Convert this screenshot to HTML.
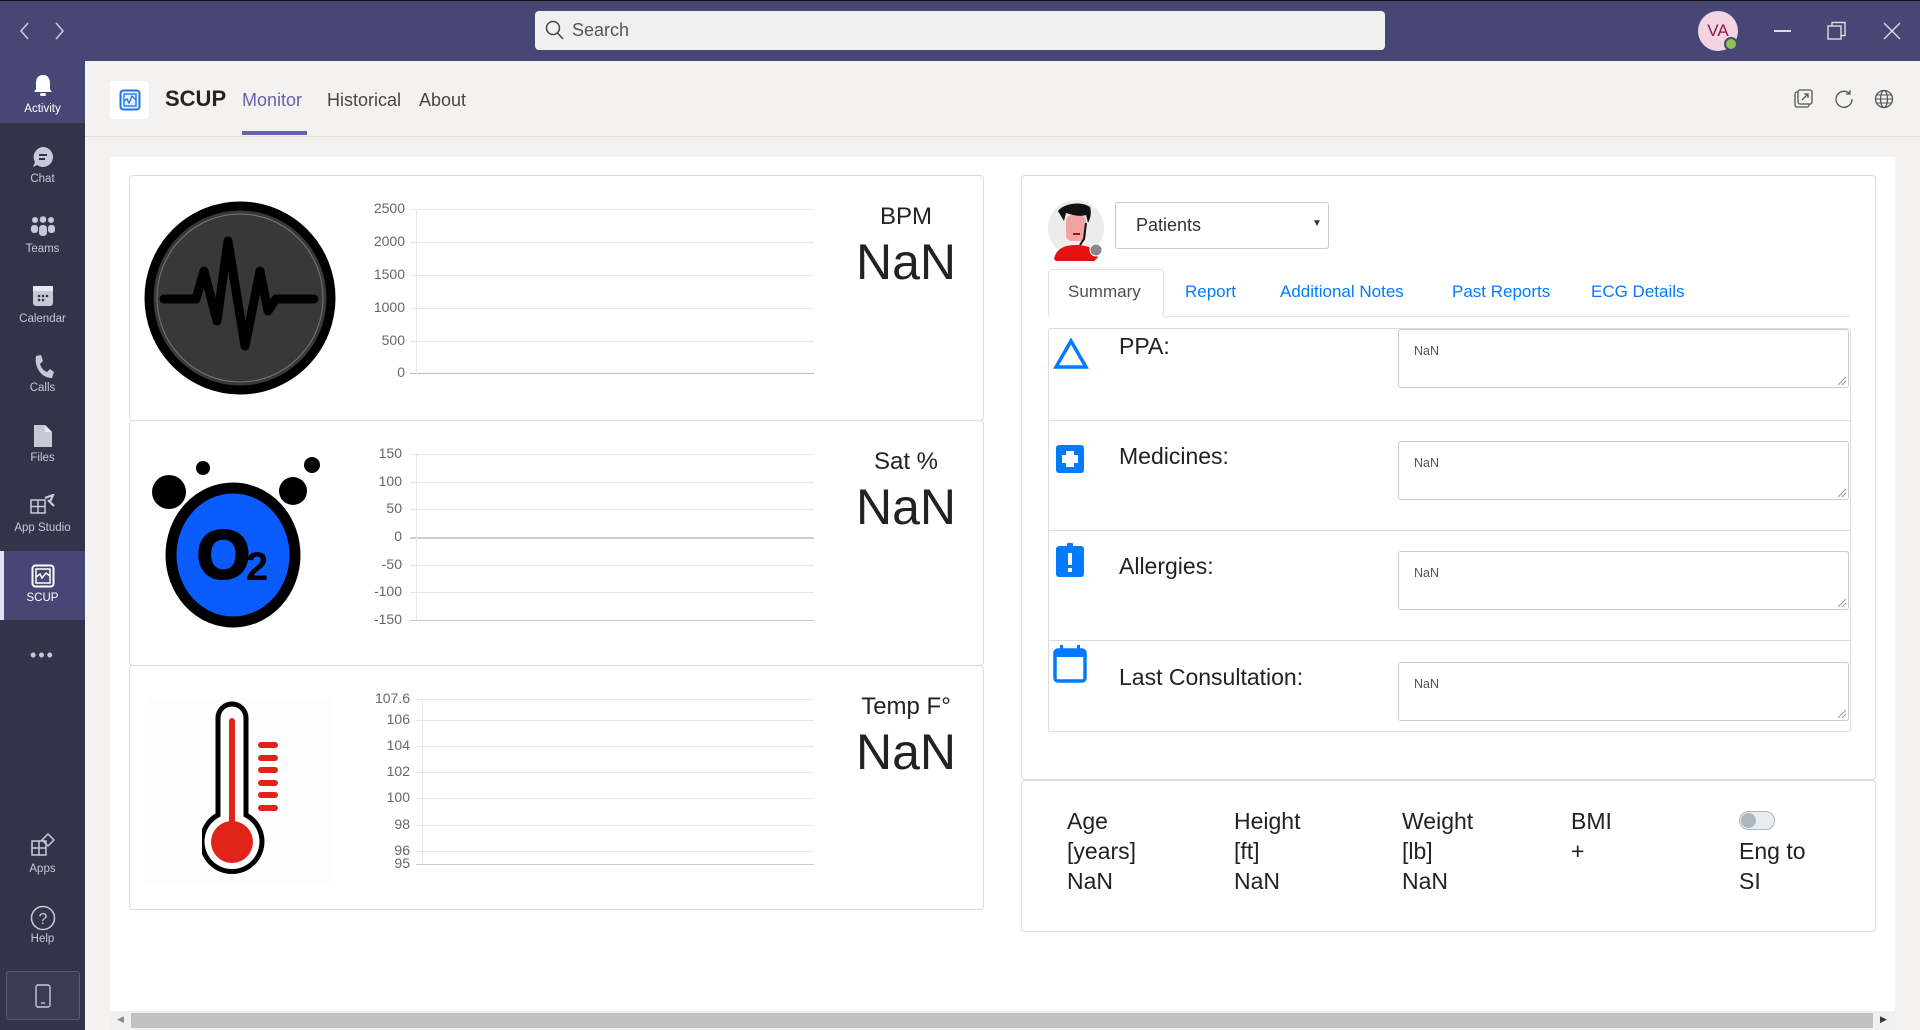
<!DOCTYPE html>
<html><head><meta charset="utf-8">
<style>
*{margin:0;padding:0;box-sizing:border-box}
body{width:1920px;height:1030px;overflow:hidden;background:#f3f2f1;font-family:"Liberation Sans",sans-serif;position:relative}
.a{position:absolute}
.top{left:0;top:0;width:1920px;height:61px;background:#464775;border-top:1px solid #111}
.side{left:0;top:61px;width:85px;height:969px;background:#33344a}
.si{position:absolute;left:0;width:85px;text-align:center;color:#c8c8d8;font-size:11.5px}
.card{position:absolute;background:#fff;border:1px solid #dcdcdc;border-radius:4px}
.yl{position:absolute;font-size:14px;color:#666;text-align:right;width:60px}
.gl{position:absolute;height:1px;background:#e6e6e6}
.big{position:absolute;font-size:50px;color:#222;width:160px;text-align:center}
.ttl{position:absolute;font-size:24px;color:#222;width:160px;text-align:center}
.tab{position:absolute;top:282px;font-size:17px;color:#007bff}
.lbl{position:absolute;left:1119px;font-size:23px;color:#222}
.ta{position:absolute;left:1398px;width:451px;height:59px;border:1px solid #ccc;border-radius:3px;background:#fff;font-size:12.5px;color:#555;padding:14px 15px}
.ta::after{content:"";position:absolute;right:2px;bottom:2px;width:8px;height:8px;background:linear-gradient(135deg,transparent 45%,#999 45%,#999 55%,transparent 55%,transparent 70%,#999 70%,#999 80%,transparent 80%)}
.hr{position:absolute;left:1048px;width:802px;height:1px;background:#dcdcdc}
.st{position:absolute;top:806px;font-size:23px;color:#222;line-height:30px}
</style></head><body>
<div class="a top"></div>
<svg class="a" style="left:16px;top:20px" width="56" height="22" viewBox="0 0 56 22"><path d="M12 3 L5 11 L12 19" stroke="#c9c9e0" stroke-width="1.6" fill="none"/><path d="M40 3 L47 11 L40 19" stroke="#c9c9e0" stroke-width="1.6" fill="none"/></svg>
<div class="a" style="left:535px;top:11px;width:850px;height:39px;background:#f0f0f0;border-radius:4px"></div>
<svg class="a" style="left:545px;top:20px" width="20" height="22"><circle cx="8" cy="8" r="6.5" stroke="#444" stroke-width="1.5" fill="none"/><path d="M12.5 13 L18 19" stroke="#444" stroke-width="1.5"/></svg>
<div class="a" style="left:572px;top:20px;font-size:18px;color:#555">Search</div>
<div class="a" style="left:1698px;top:11px;width:40px;height:40px;border-radius:50%;background:#f3d4e0;color:#8a1c47;font-size:17px;text-align:center;line-height:40px">VA</div>
<div class="a" style="left:1724px;top:37px;width:14px;height:14px;border-radius:50%;background:#92c353;border:2px solid #464775"></div>
<div class="a" style="left:1774px;top:30px;width:17px;height:1.5px;background:#ddd"></div>
<svg class="a" style="left:1827px;top:21px" width="20" height="20"><rect x="1" y="5" width="13" height="13" stroke="#ddd" stroke-width="1.4" fill="none"/><path d="M5 5 V1.5 H18 V14.5 H14" stroke="#ddd" stroke-width="1.4" fill="none"/></svg>
<svg class="a" style="left:1883px;top:22px" width="18" height="18"><path d="M1 1 L17 17 M17 1 L1 17" stroke="#ddd" stroke-width="1.4"/></svg>

<div class="a side"></div>
<div class="a" style="left:0;top:61px;width:85px;height:62px;background:#464775"></div>
<div class="a" style="left:0;top:551px;width:85px;height:69px;background:#464775"></div>
<div class="a" style="left:0;top:551px;width:4px;height:69px;background:#e2e2f6"></div>
<svg class="a" style="left:32px;top:73px" width="22" height="26"><path d="M11 2 C5 2 4 7 4 11 V16 L2 19 H20 L18 16 V11 C18 7 17 2 11 2Z" fill="#fff"/><rect x="8" y="20" width="6" height="3" rx="1.5" fill="#fff"/></svg>
<div class="si" style="top:103px;color:#fff">Activity</div>
<svg class="a" style="left:31px;top:145px" width="24" height="24"><path d="M12 2 A10 10 0 1 1 6 20 L2 22 L4 17 A10 10 0 0 1 12 2Z" fill="#c8c8d8"/><path d="M8 10 H16 M8 14 H14" stroke="#33344a" stroke-width="2"/></svg>
<div class="si" style="top:173px">Chat</div>
<svg class="a" style="left:30px;top:216px" width="26" height="22"><circle cx="5" cy="4" r="3" fill="#c8c8d8"/><circle cx="13" cy="3.5" r="3.3" fill="#c8c8d8"/><circle cx="21" cy="4" r="3" fill="#c8c8d8"/><rect x="1" y="9" width="7" height="8" rx="3" fill="#c8c8d8"/><rect x="9" y="9" width="8" height="11" rx="3.5" fill="#c8c8d8"/><rect x="18" y="9" width="7" height="8" rx="3" fill="#c8c8d8"/></svg>
<div class="si" style="top:243px">Teams</div>
<svg class="a" style="left:32px;top:285px" width="22" height="22"><rect x="1" y="1" width="20" height="20" rx="3" fill="#c8c8d8"/><rect x="1" y="1" width="20" height="5" fill="#e8e8f0"/><g fill="#33344a"><circle cx="7" cy="11" r="1.3"/><circle cx="11" cy="11" r="1.3"/><circle cx="15" cy="11" r="1.3"/><circle cx="7" cy="15" r="1.3"/><circle cx="11" cy="15" r="1.3"/></g></svg>
<div class="si" style="top:313px">Calendar</div>
<svg class="a" style="left:32px;top:354px" width="22" height="26"><path d="M4 2 L9 1 L11 7 L8 10 C9 14 12 17 15 18 L18 15 L22 18 L20 24 C10 24 2 14 4 2Z" fill="#c8c8d8"/></svg>
<div class="si" style="top:382px">Calls</div>
<svg class="a" style="left:33px;top:424px" width="20" height="24"><path d="M1 1 H12 L19 8 V23 H1Z" fill="#c8c8d8"/><path d="M12 1 V8 H19" fill="#e8e8f0"/></svg>
<div class="si" style="top:452px">Files</div>
<svg class="a" style="left:30px;top:494px" width="26" height="22"><rect x="1" y="6" width="14" height="13" stroke="#c8c8d8" stroke-width="1.5" fill="none"/><path d="M1 12.5 H15 M8 6 V19" stroke="#c8c8d8" stroke-width="1.5"/><path d="M15 4 L23 1 L20 8 M18 6 L24 12" stroke="#c8c8d8" stroke-width="2.2" fill="none"/></svg>
<div class="si" style="top:522px">App Studio</div>
<svg class="a" style="left:31px;top:564px" width="24" height="24"><rect x="1.5" y="1.5" width="21" height="21" rx="3" stroke="#fff" stroke-width="2" fill="none"/><rect x="5" y="5" width="14" height="14" stroke="#fff" stroke-width="1.5" fill="none"/><path d="M5 13 L9 10 L11 14 L15 9 L19 12" stroke="#fff" stroke-width="1.5" fill="none"/></svg>
<div class="si" style="top:592px;color:#fff">SCUP</div>
<div class="si" style="top:645px;font-size:18px;letter-spacing:2px">•••</div>
<svg class="a" style="left:31px;top:833px" width="24" height="24"><rect x="1" y="8" width="14" height="14" stroke="#c8c8d8" stroke-width="1.5" fill="none"/><path d="M1 15 H15 M8 8 V22" stroke="#c8c8d8" stroke-width="1.5"/><path d="M17 1 L23 7 L17 13 L11 7Z" stroke="#c8c8d8" stroke-width="1.5" fill="none"/></svg>
<div class="si" style="top:863px">Apps</div>
<svg class="a" style="left:30px;top:905px" width="26" height="26"><circle cx="13" cy="13" r="11.5" stroke="#c8c8d8" stroke-width="1.5" fill="none"/><text x="13" y="19" font-size="16" fill="#c8c8d8" text-anchor="middle" font-family="Liberation Sans">?</text></svg>
<div class="si" style="top:933px">Help</div>
<div class="a" style="left:6px;top:971px;width:74px;height:49px;border:1px solid #5a5b75;border-radius:3px;background:#3b3c54"></div>
<svg class="a" style="left:35px;top:984px" width="16" height="24"><rect x="1" y="1" width="14" height="22" rx="2" stroke="#c8c8d8" stroke-width="1.4" fill="none"/><path d="M6 19 H10" stroke="#c8c8d8" stroke-width="1.4"/></svg>

<div class="a" style="left:85px;top:136px;width:1835px;height:1px;background:#e1dfdd"></div>
<div class="a" style="left:110px;top:81px;width:39px;height:38px;background:#fff;border-radius:3px"></div>
<svg class="a" style="left:119px;top:89px" width="22" height="22"><rect x="1.5" y="1.5" width="19" height="19" rx="3" stroke="#1a73e8" stroke-width="2" fill="#e8f0fe"/><rect x="5" y="5" width="12" height="12" stroke="#1a73e8" stroke-width="1.3" fill="none"/><path d="M5 12 L8 10 L10 14 L13 7 L17 11" stroke="#1a73e8" stroke-width="1.3" fill="none"/></svg>
<div class="a" style="left:165px;top:86px;font-size:22px;font-weight:bold;color:#252423">SCUP</div>
<div class="a" style="left:242px;top:90px;font-size:18px;color:#6264a7">Monitor</div>
<div class="a" style="left:242px;top:131px;width:65px;height:4px;background:#6264a7"></div>
<div class="a" style="left:327px;top:90px;font-size:18px;color:#484644">Historical</div>
<div class="a" style="left:419px;top:90px;font-size:18px;color:#484644">About</div>
<svg class="a" style="left:1794px;top:89px" width="20" height="20"><rect x="1" y="3" width="14" height="15" rx="2" stroke="#555" stroke-width="1.3" fill="none"/><rect x="4" y="1" width="14" height="14" rx="2" stroke="#555" stroke-width="1.3" fill="#f3f2f1"/><path d="M8 11 L14 5 M10 5 H14 V9" stroke="#555" stroke-width="1.3" fill="none"/></svg>
<svg class="a" style="left:1834px;top:89px" width="20" height="20"><path d="M16 5 A8 8 0 1 0 18 10" stroke="#555" stroke-width="1.3" fill="none"/><path d="M16 1 V5 H12" stroke="#555" stroke-width="1.3" fill="none"/></svg>
<svg class="a" style="left:1874px;top:89px" width="20" height="20"><circle cx="10" cy="10" r="8.5" stroke="#555" stroke-width="1.3" fill="none"/><ellipse cx="10" cy="10" rx="3.5" ry="8.5" stroke="#555" stroke-width="1.3" fill="none"/><path d="M1.5 10 H18.5 M3 6 H17 M3 14 H17" stroke="#555" stroke-width="1.1"/></svg>

<div class="a" style="left:110px;top:157px;width:1785px;height:854px;background:#fff"></div>
<div class="a" style="left:110px;top:1011px;width:1785px;height:19px;background:#f0f0f0"></div>
<div class="a" style="left:131px;top:1013px;width:1742px;height:15px;background:#c1c1c1"></div>
<div class="a" style="left:117px;top:1014px;font-size:9px;color:#888">◀</div>
<div class="a" style="left:1880px;top:1014px;font-size:9px;color:#333">▶</div>

<div class="card" style="left:129px;top:175px;width:855px;height:246px"></div>
<div class="card" style="left:129px;top:420px;width:855px;height:246px"></div>
<div class="card" style="left:129px;top:665px;width:855px;height:245px"></div>

<svg class="a" style="left:144px;top:201px" width="192" height="194" viewBox="0 0 192 194"><ellipse cx="96" cy="97" rx="91" ry="92" fill="#383838" stroke="#000" stroke-width="9"/><ellipse cx="96" cy="97" rx="83" ry="84" fill="none" stroke="#777" stroke-width="1"/><path d="M20 98 H52 L60 70 L73 120 L84 40 L101 145 L116 70 L124 110 L132 98 H170" stroke="#000" stroke-width="9" fill="none" stroke-linejoin="round" stroke-linecap="round"/></svg>

<div class="gl" style="left:410px;top:209px;width:404px"></div>
<div class="gl" style="left:410px;top:242px;width:404px"></div>
<div class="gl" style="left:410px;top:275px;width:404px"></div>
<div class="gl" style="left:410px;top:308px;width:404px"></div>
<div class="gl" style="left:410px;top:341px;width:404px"></div>
<div class="gl" style="left:410px;top:373px;width:404px;background:#bbb"></div>
<div class="gl" style="left:416px;top:209px;width:1px;height:165px"></div>
<div class="yl" style="left:345px;top:200px">2500</div>
<div class="yl" style="left:345px;top:233px">2000</div>
<div class="yl" style="left:345px;top:266px">1500</div>
<div class="yl" style="left:345px;top:299px">1000</div>
<div class="yl" style="left:345px;top:332px">500</div>
<div class="yl" style="left:345px;top:364px">0</div>
<div class="ttl" style="left:826px;top:203px">BPM</div>
<div class="big" style="left:826px;top:233px">NaN</div>

<svg class="a" style="left:145px;top:450px" width="190" height="180" viewBox="0 0 190 180"><circle cx="24" cy="42" r="17" fill="#000"/><circle cx="58" cy="18" r="7" fill="#000"/><circle cx="148" cy="41" r="14" fill="#000"/><circle cx="167" cy="15" r="8" fill="#000"/><ellipse cx="88" cy="105" rx="62" ry="67" fill="#0a5cff" stroke="#000" stroke-width="11"/><text x="52" y="128" font-family="Liberation Sans" font-weight="bold" font-size="68" fill="#000" stroke="#000" stroke-width="3">O</text><text x="101" y="130" font-family="Liberation Sans" font-weight="bold" font-size="40" fill="#000">2</text></svg>

<div class="gl" style="left:410px;top:454px;width:404px"></div>
<div class="gl" style="left:410px;top:482px;width:404px"></div>
<div class="gl" style="left:410px;top:509px;width:404px"></div>
<div class="gl" style="left:410px;top:537px;width:404px;height:2px;background:#ccc"></div>
<div class="gl" style="left:410px;top:565px;width:404px"></div>
<div class="gl" style="left:410px;top:592px;width:404px"></div>
<div class="gl" style="left:410px;top:620px;width:404px;background:#ccc"></div>
<div class="gl" style="left:416px;top:454px;width:1px;height:166px"></div>
<div class="yl" style="left:342px;top:445px">150</div>
<div class="yl" style="left:342px;top:473px">100</div>
<div class="yl" style="left:342px;top:500px">50</div>
<div class="yl" style="left:342px;top:528px">0</div>
<div class="yl" style="left:342px;top:556px">-50</div>
<div class="yl" style="left:342px;top:583px">-100</div>
<div class="yl" style="left:342px;top:611px">-150</div>
<div class="ttl" style="left:826px;top:448px">Sat %</div>
<div class="big" style="left:826px;top:478px">NaN</div>

<div class="a" style="left:146px;top:698px;width:186px;height:186px;background:#fdfdfd"></div>
<svg class="a" style="left:202px;top:700px" width="100" height="175" viewBox="0 0 100 175"><path d="M16 18 A14 14 0 0 1 44 18 V115 A30 30 0 1 1 16 115Z" fill="#fff" stroke="#000" stroke-width="5"/><rect x="27" y="18" width="6" height="110" rx="3" fill="#e2231a"/><circle cx="30" cy="142" r="21" fill="#e2231a"/><g fill="#e2231a"><rect x="56" y="42" width="20" height="6" rx="3"/><rect x="56" y="55" width="20" height="6" rx="3"/><rect x="56" y="67" width="20" height="6" rx="3"/><rect x="56" y="80" width="20" height="6" rx="3"/><rect x="56" y="92" width="20" height="6" rx="3"/><rect x="56" y="105" width="20" height="6" rx="3"/></g></svg>

<div class="gl" style="left:416px;top:699px;width:398px"></div>
<div class="gl" style="left:416px;top:720px;width:398px"></div>
<div class="gl" style="left:416px;top:746px;width:398px"></div>
<div class="gl" style="left:416px;top:772px;width:398px"></div>
<div class="gl" style="left:416px;top:798px;width:398px"></div>
<div class="gl" style="left:416px;top:825px;width:398px"></div>
<div class="gl" style="left:416px;top:851px;width:398px"></div>
<div class="gl" style="left:416px;top:864px;width:398px;background:#ccc"></div>
<div class="gl" style="left:422px;top:699px;width:1px;height:165px"></div>
<div class="yl" style="left:350px;top:690px">107.6</div>
<div class="yl" style="left:350px;top:711px">106</div>
<div class="yl" style="left:350px;top:737px">104</div>
<div class="yl" style="left:350px;top:763px">102</div>
<div class="yl" style="left:350px;top:789px">100</div>
<div class="yl" style="left:350px;top:816px">98</div>
<div class="yl" style="left:350px;top:842px">96</div>
<div class="yl" style="left:350px;top:855px">95</div>
<div class="ttl" style="left:826px;top:693px">Temp F°</div>
<div class="big" style="left:826px;top:723px">NaN</div>

<div class="card" style="left:1021px;top:175px;width:855px;height:605px"></div>
<div class="card" style="left:1021px;top:780px;width:855px;height:152px"></div>
<svg class="a" style="left:1046px;top:199px" width="62" height="62" viewBox="0 0 62 62"><circle cx="30" cy="29" r="28" fill="#ececec"/><path d="M8 60 C10 50 18 46 30 46 C42 46 50 50 52 58 A28 28 0 0 1 8 60Z" fill="#e41111"/><rect x="20" y="16" width="20" height="26" rx="6" fill="#f0a4a4"/><path d="M12 12 C18 4 36 2 44 8 C46 14 44 20 42 24 L40 16 C34 18 26 16 20 14 L18 22 Z" fill="#111"/><path d="M40 24 L38 40 L34 46" stroke="#111" stroke-width="2" fill="none"/><rect x="27" y="34" width="7" height="2" fill="#c00"/><circle cx="50" cy="51" r="6" fill="#888" stroke="#fff" stroke-width="1"/></svg>
<div class="a" style="left:1115px;top:202px;width:214px;height:47px;border:1px solid #ccc;border-radius:3px;background:#fff"></div>
<div class="a" style="left:1136px;top:215px;font-size:18px;color:#333">Patients</div>
<div class="a" style="left:1312px;top:218px;font-size:10px;color:#333">▼</div>

<div class="a" style="left:1048px;top:316px;width:802px;height:1px;background:#dee2e6"></div>
<div class="a" style="left:1048px;top:269px;width:116px;height:48px;border:1px solid #dee2e6;border-bottom:1px solid #fff;border-radius:4px 4px 0 0;background:#fff"></div>
<div class="tab" style="left:1068px;color:#495057">Summary</div>
<div class="tab" style="left:1185px">Report</div>
<div class="tab" style="left:1280px">Additional Notes</div>
<div class="tab" style="left:1452px">Past Reports</div>
<div class="tab" style="left:1591px">ECG Details</div>

<div class="a" style="left:1048px;top:328px;width:803px;height:404px;border:1px solid #dcdcdc;border-radius:3px"></div>
<div class="hr" style="top:420px"></div>
<div class="hr" style="top:530px"></div>
<div class="hr" style="top:640px"></div>

<svg class="a" style="left:1053px;top:338px" width="36" height="32"><path d="M18 3 L33 29 H3Z" stroke="#007bff" stroke-width="3.5" fill="none"/></svg>
<svg class="a" style="left:1054px;top:443px" width="32" height="32"><rect x="2" y="2" width="28" height="28" rx="3" fill="#007bff"/><path d="M12 8 H20 V12 H24 V20 H20 V24 H12 V20 H8 V12 H12Z" fill="#fff"/></svg>
<svg class="a" style="left:1054px;top:541px" width="32" height="38"><rect x="2" y="5" width="28" height="31" rx="3" fill="#007bff"/><rect x="13" y="2" width="6" height="6" rx="1" fill="#007bff"/><rect x="14" y="12" width="4" height="12" fill="#fff"/><rect x="14" y="27" width="4" height="4" fill="#fff"/></svg>
<svg class="a" style="left:1052px;top:643px" width="36" height="40"><rect x="3" y="7" width="30" height="31" rx="3" stroke="#007bff" stroke-width="3.5" fill="none"/><rect x="3" y="7" width="30" height="7" fill="#007bff"/><rect x="8" y="2" width="3" height="7" fill="#007bff"/><rect x="25" y="2" width="3" height="7" fill="#007bff"/></svg>

<div class="lbl" style="top:333px">PPA:</div>
<div class="lbl" style="top:443px">Medicines:</div>
<div class="lbl" style="top:553px">Allergies:</div>
<div class="lbl" style="top:664px">Last Consultation:</div>
<div class="ta" style="top:329px">NaN</div>
<div class="ta" style="top:441px">NaN</div>
<div class="ta" style="top:551px">NaN</div>
<div class="ta" style="top:662px">NaN</div>

<div class="st" style="left:1067px">Age<br>[years]<br>NaN</div>
<div class="st" style="left:1234px">Height<br>[ft]<br>NaN</div>
<div class="st" style="left:1402px">Weight<br>[lb]<br>NaN</div>
<div class="st" style="left:1571px">BMI<br>+</div>
<div class="a" style="left:1739px;top:811px;width:36px;height:19px;border-radius:10px;background:#e9ecef;border:1px solid #adb5bd"></div>
<div class="a" style="left:1741px;top:813px;width:15px;height:15px;border-radius:50%;background:#adb5bd"></div>
<div class="st" style="left:1739px;top:836px">Eng to<br>SI</div>
</body></html>
